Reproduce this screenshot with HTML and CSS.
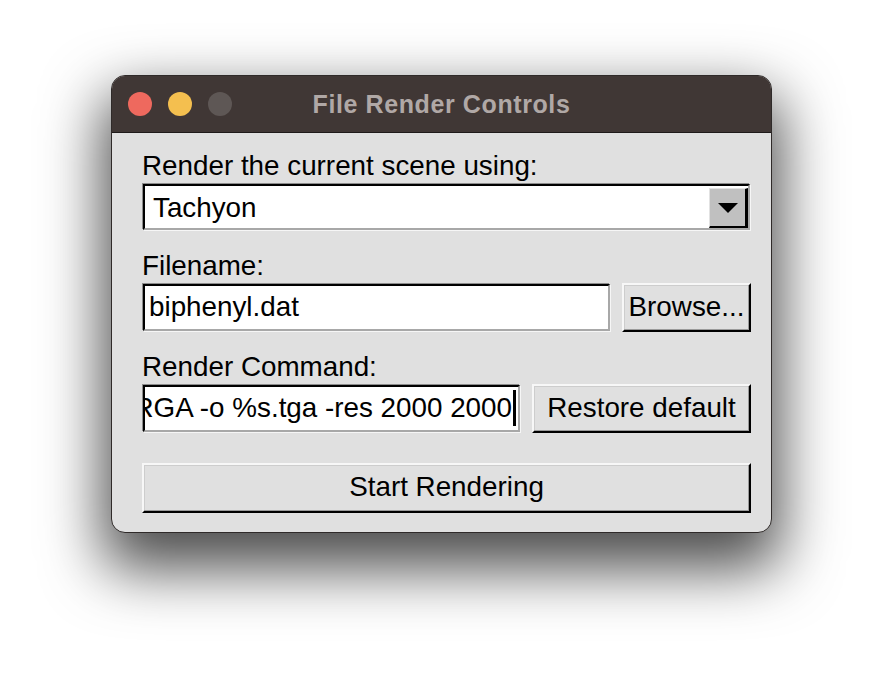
FILE: index.html
```html
<!DOCTYPE html>
<html>
<head>
<meta charset="utf-8">
<title>File Render Controls</title>
<link rel="stylesheet" href="styles.css">
</head>
<body>
<div class="stage">
  <div class="window">
    <div class="titlebar">
      <div class="lights">
        <span class="light red"></span>
        <span class="light yellow"></span>
        <span class="light gray"></span>
      </div>
      <div class="title">File Render Controls</div>
      <div></div>
    </div>
    <div class="content">
      <div class="label">Render the current scene using:</div>
      <div class="row combo-row">
        <div class="combo">
          <span class="combo-text">Tachyon</span>
          <span class="arrow"><span class="tri"></span></span>
        </div>
      </div>

      <div class="label next">Filename:</div>
      <div class="row">
        <div class="entry"><span class="etext">biphenyl.dat</span></div>
        <div class="btn browse">Browse...</div>
      </div>

      <div class="label next">Render Command:</div>
      <div class="row">
        <div class="entry cmd"><span class="etext">TARGA -o %s.tga -res 2000 2000</span><span class="cursor"></span></div>
        <div class="btn restore">Restore default</div>
      </div>

      <div class="btn start">Start Rendering</div>
    </div>
  </div>
</div>
</body>
</html>
```

FILE: styles.css
```css
html, body {
  margin: 0;
  background: #ffffff;
  font-family: "Liberation Sans", Arial, Helvetica, sans-serif;
  color: #000;
}

.stage {
  box-sizing: border-box;
  min-height: 680px;
  padding: 75px 0 0 111px;
}

.window {
  width: 661px;
  box-sizing: border-box;
  border: 1px solid #2f2a29;
  border-radius: 14px;
  overflow: hidden;
  background: #e0e0e0;
  box-shadow: 0 28px 60px 8px rgba(0, 0, 0, 0.7);
}

.titlebar {
  height: 56px;
  background: #403735;
  border-bottom: 1px solid #1e1a19;
  display: grid;
  grid-template-columns: 1fr auto 1fr;
  align-items: center;
}

.lights {
  display: flex;
  gap: 16px;
  padding-left: 16px;
}

.light {
  width: 24px;
  height: 24px;
  border-radius: 50%;
}

.light.red { background: #ee695e; }
.light.yellow { background: #f4bf4f; }
.light.gray { background: #5e5755; }

.title {
  font-weight: bold;
  font-size: 25px;
  letter-spacing: 0.6px;
  color: #b0a8a6;
}

.content {
  padding: 14px 20px 19px 30px;
  display: flex;
  flex-direction: column;
}

.label {
  font-size: 27.8px;
  line-height: 26px;
  height: 32px;
  box-sizing: border-box;
  padding-top: 6px;
  white-space: nowrap;
}

.label.next {
  margin-top: 16px;
}

.row {
  display: flex;
  gap: 11px;
  margin-top: 4px;
}

.combo {
  flex: 1;
  margin: 1px;
  height: 46px;
  box-sizing: border-box;
  border: 2px solid;
  border-color: #000 #a8a8a8 #a8a8a8 #000;
  box-shadow: -1px -1px 0 #8c8c8c, 1px 1px 0 #f6f6f6;
  background: #fff;
  display: flex;
}

.combo-text {
  flex: 1;
  align-self: center;
  padding-left: 8px;
  margin-top: 2px;
  font-size: 27.8px;
  line-height: 32px;
}

.arrow {
  width: 39px;
  margin-top: 2px;
  box-sizing: border-box;
  border-style: solid;
  border-width: 1px 3px 2px 1px;
  border-color: #e2e2e2 #000 #000 #e2e2e2;
  background: #c0c0c0;
  display: flex;
  align-items: center;
  justify-content: center;
}

.tri {
  width: 0;
  height: 0;
  border-left: 10px solid transparent;
  border-right: 10px solid transparent;
  border-top: 10px solid #000;
}

.entry {
  flex: 1;
  min-width: 0;
  margin: 1px;
  height: 47px;
  box-sizing: border-box;
  border: 2px solid;
  border-color: #000 #a8a8a8 #a8a8a8 #000;
  box-shadow: -1px -1px 0 #8c8c8c, 1px 1px 0 #f6f6f6;
  background: #fff;
  display: flex;
  align-items: center;
  overflow: hidden;
  white-space: nowrap;
  padding: 0 0 1px 4px;
  font-size: 27.8px;
  line-height: 32px;
}

.etext {
  flex-shrink: 0;
}

.entry.cmd {
  justify-content: flex-end;
  padding: 0 2px 1px 0;
}

.cursor {
  flex-shrink: 0;
  width: 3px;
  height: 36px;
  background: #000;
  margin-left: 1px;
}

.btn {
  box-sizing: border-box;
  height: 49px;
  flex-shrink: 0;
  border: 2px solid;
  border-color: #f7f7f7 #000 #000 #f7f7f7;
  box-shadow: inset -1px -1px 0 #9a9a9a, inset 1px 1px 0 #cdcdcd;
  background: #e0e0e0;
  font-size: 27.8px;
  line-height: 32px;
  display: flex;
  align-items: center;
  justify-content: center;
  padding-bottom: 2px;
  white-space: nowrap;
}

.browse { width: 129px; }
.restore { width: 219px; }

.start {
  margin-top: 30px;
  height: 50px;
}
```
